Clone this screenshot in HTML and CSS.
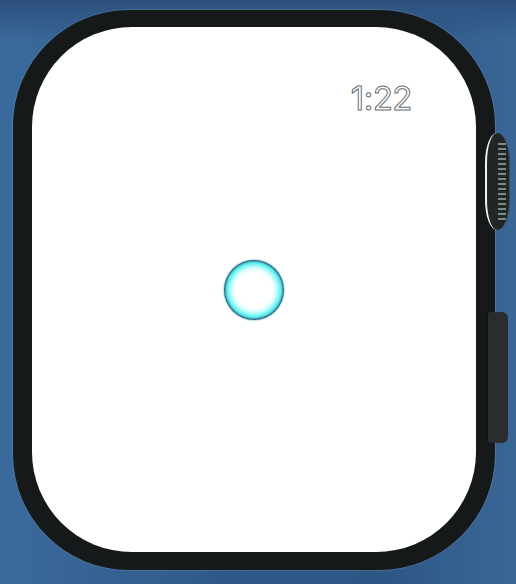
FILE: index.html
```html
<!DOCTYPE html>
<html lang="en">
<head>
<meta charset="utf-8">
<title>Watch</title>
<link rel="stylesheet" href="styles.css">
</head>
<body>
<div class="stage">
  <div class="watch">
    <div class="crown"><div class="ridges"></div></div>
    <div class="side-button"></div>
    <div class="screen">
      <div class="time">1:22</div>
      <div class="orb"></div>
    </div>
  </div>
</div>
</body>
</html>
```
FILE: styles.css
```css
html, body {
  margin: 0;
  padding: 0;
}
body {
  width: 516px;
  height: 584px;
  overflow: hidden;
  background:
    linear-gradient(180deg, #2c4f7a 0px, #2f5684 10px, rgba(0,0,0,0) 40px),
    linear-gradient(90deg, #3a6a9c 0%, #2f5888 45%, #2e5685 75%, #3a6797 100%);
  background-color: #325d8c;
}
.stage {
  padding: 10px 0 0 13px;
}
.watch {
  position: relative;
  width: 482px;
  height: 560px;
  box-sizing: border-box;
  padding: 17px 19px 18px 19px;
  border-radius: 116px;
  background: #161919;
  box-shadow: 0 0 0 1px rgba(120, 150, 180, 0.35);
}
.screen {
  width: 444px;
  height: 525px;
  background: #ffffff;
  border-radius: 100px;
  display: grid;
  place-items: center;
}
.time {
  grid-area: 1 / 1;
  align-self: start;
  justify-self: end;
  margin: 53px 64px 0 0;
  font-family: "Inter", "Roboto", sans-serif;
  font-size: 33px;
  font-weight: 400;
  line-height: 1.1;
  letter-spacing: -0.5px;
  color: #ffffff;
  -webkit-text-stroke: 1px #6a6f73;
}
.orb {
  grid-area: 1 / 1;
  width: 60px;
  height: 60px;
  border-radius: 50%;
  box-sizing: border-box;
  background: radial-gradient(circle closest-side at 50% 50%, #ffffff 0%, #ffffff 58%, #e6fefe 70%, #a6faf8 80%, #66f2f0 88%, #4ad6da 93%, #347896 97%, #2a4a66 100%);
  box-shadow: 0 0 1px 1px rgba(110, 200, 215, 0.5);
}
.crown {
  position: absolute;
  left: 472px;
  top: 123px;
  width: 22px;
  height: 97px;
  border-radius: 12px / 30px;
  background: #232627;
  border-left: 2px solid #f2f2f2;
  box-shadow: 1px 0 0 #3a4a5a;
  overflow: hidden;
}
.ridges {
  position: absolute;
  right: 3px;
  top: 10px;
  width: 8px;
  height: 77px;
  background: repeating-linear-gradient(180deg, #7c8a86 0px, #7c8a86 2px, transparent 2px, transparent 5px);
}
.side-button {
  position: absolute;
  left: 474px;
  top: 302px;
  width: 20px;
  height: 131px;
  border-radius: 3px 6px 6px 3px;
  background: #2a2c2d;
  border-left: 1px solid #111;
}
```
